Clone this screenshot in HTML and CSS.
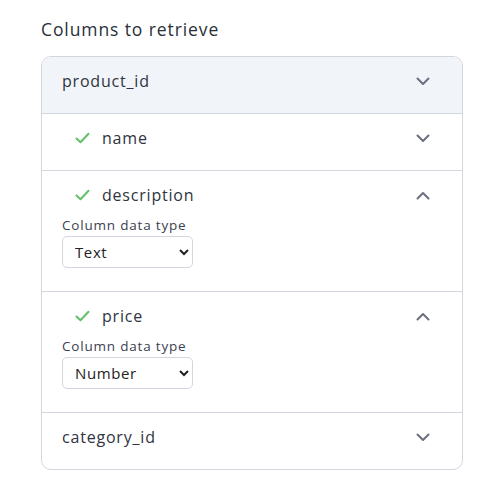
FILE: index.html
```html
<!DOCTYPE html>
<html>
<head>
<meta charset="utf-8">
<link rel="stylesheet" href="styles.css">
</head>
<body>
<div class="panel">
  <h2 class="title">Columns to retrieve</h2>
  <div class="card">
    <div class="row row-active">
      <div class="row-head">
        <span class="name">product_id</span>
        <svg class="chev" width="14" height="9" viewBox="0 0 14 9"><path d="M1.5 1.5 L7 7 L12.5 1.5" fill="none" stroke="currentColor" stroke-width="2" stroke-linecap="round" stroke-linejoin="round"/></svg>
      </div>
    </div>
    <div class="row">
      <div class="row-head indent">
        <svg class="check" width="15" height="12" viewBox="0 0 15 12"><path d="M1.5 6.5 L5.5 10.2 L13.5 1.8" fill="none" stroke="currentColor" stroke-width="2" stroke-linecap="round" stroke-linejoin="round"/></svg>
        <span class="name">name</span>
        <svg class="chev" width="14" height="9" viewBox="0 0 14 9"><path d="M1.5 1.5 L7 7 L12.5 1.5" fill="none" stroke="currentColor" stroke-width="2" stroke-linecap="round" stroke-linejoin="round"/></svg>
      </div>
    </div>
    <div class="row row-open">
      <div class="row-head indent">
        <svg class="check" width="15" height="12" viewBox="0 0 15 12"><path d="M1.5 6.5 L5.5 10.2 L13.5 1.8" fill="none" stroke="currentColor" stroke-width="2" stroke-linecap="round" stroke-linejoin="round"/></svg>
        <span class="name">description</span>
        <svg class="chev" width="14" height="9" viewBox="0 0 14 9"><path d="M1.5 7.5 L7 2 L12.5 7.5" fill="none" stroke="currentColor" stroke-width="2" stroke-linecap="round" stroke-linejoin="round"/></svg>
      </div>
      <div class="row-body">
        <label class="label">Column data type</label>
        <select class="select"><option>Text</option><option>Number</option></select>
      </div>
    </div>
    <div class="row row-open">
      <div class="row-head indent">
        <svg class="check" width="15" height="12" viewBox="0 0 15 12"><path d="M1.5 6.5 L5.5 10.2 L13.5 1.8" fill="none" stroke="currentColor" stroke-width="2" stroke-linecap="round" stroke-linejoin="round"/></svg>
        <span class="name">price</span>
        <svg class="chev" width="14" height="9" viewBox="0 0 14 9"><path d="M1.5 7.5 L7 2 L12.5 7.5" fill="none" stroke="currentColor" stroke-width="2" stroke-linecap="round" stroke-linejoin="round"/></svg>
      </div>
      <div class="row-body">
        <label class="label">Column data type</label>
        <select class="select"><option>Number</option><option>Text</option></select>
      </div>
    </div>
    <div class="row">
      <div class="row-head">
        <span class="name">category_id</span>
        <svg class="chev" width="14" height="9" viewBox="0 0 14 9"><path d="M1.5 1.5 L7 7 L12.5 1.5" fill="none" stroke="currentColor" stroke-width="2" stroke-linecap="round" stroke-linejoin="round"/></svg>
      </div>
    </div>
  </div>
</div>
</body>
</html>
```
FILE: styles.css
```css
* { box-sizing: border-box; }
html, body { margin: 0; padding: 0; background: #fff; }
body {
  font-family: "Open Sans", "Noto Sans", sans-serif;
  color: #2f3440;
}
.panel {
  padding: 17px 37px 0 41px;
}
.title {
  margin: 0 0 15px 0;
  font-size: 17.5px;
  font-weight: 400;
  line-height: 24px;
  letter-spacing: 0.9px;
  color: #2a2f3a;
}
.card {
  border: 1px solid #d3d6df;
  border-radius: 10px;
  overflow: hidden;
}
.row {
  border-top: 1px solid #d3d6df;
  padding: 10px 32px 18px 20px;
}
.row:first-child { border-top: none; }
.row-active { background: #f1f4f9; }
.row-head {
  display: flex;
  align-items: center;
  height: 28px;
}
.row-head.indent { padding-left: 13px; }
.name {
  flex: 1;
  font-size: 16px;
  letter-spacing: 0.8px;
  color: #2f3440;
}
.check {
  color: #62c06a;
  margin-right: 12px;
}
.chev {
  color: #6b7080;
}
.row-body {
  display: flex;
  flex-direction: column;
  align-items: flex-start;
  padding-top: 8px;
  padding-bottom: 5px;
}
.label {
  font-size: 13.5px;
  line-height: 16px;
  letter-spacing: 0.8px;
  color: #3c4150;
}
.select {
  margin-top: 3px;
  width: 131px;
  height: 32px;
  border: 1px solid #d3d6df;
  border-radius: 5px;
  background: #fff;
  padding: 0 8px;
  font-family: "Open Sans", "Noto Sans", sans-serif;
  font-size: 15px;
  letter-spacing: 0.6px;
  color: #222;
}
```
